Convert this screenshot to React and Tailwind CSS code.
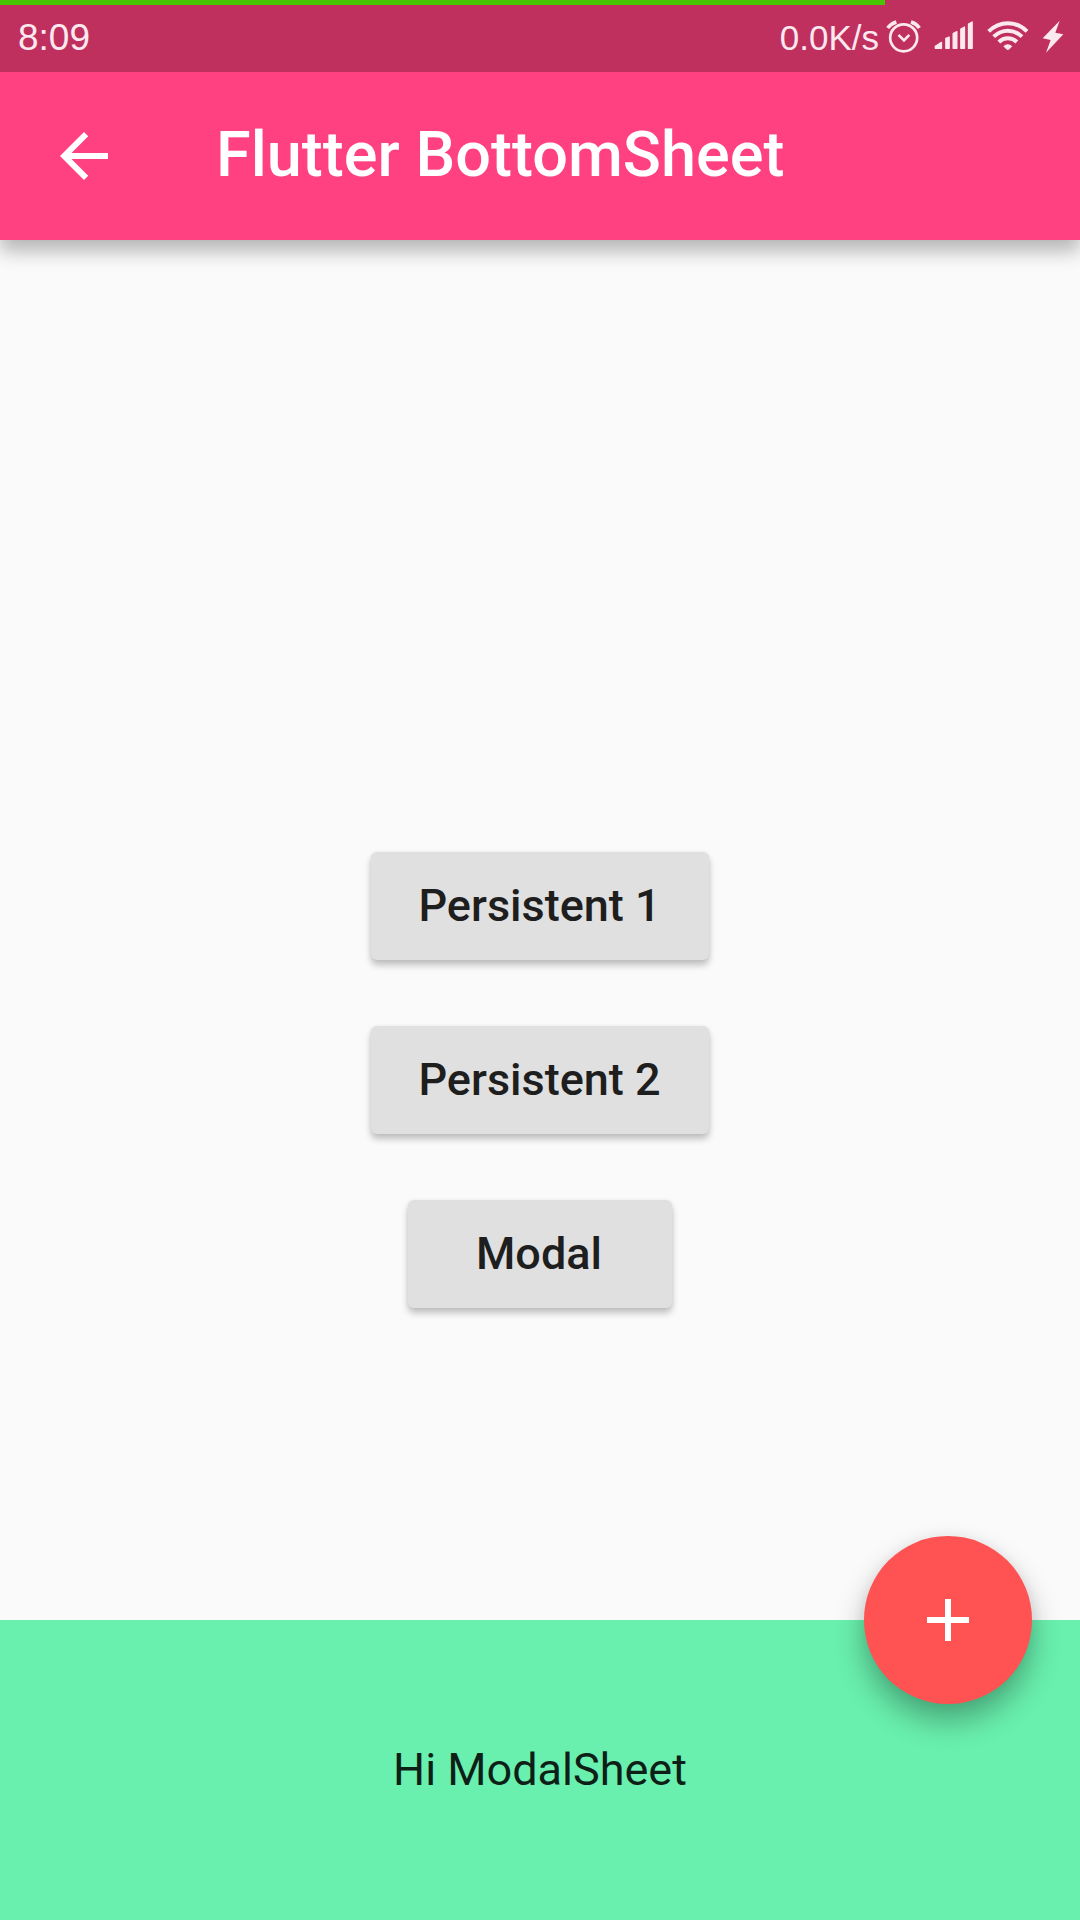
function AlarmIcon() {
  return (
    <svg className="mt-[19px] h-[35px] w-[35px] shrink-0" viewBox="378 57 105 105" fill="none" stroke="currentColor">
      <circle cx="431" cy="113.5" r="40.5" strokeWidth="8" />
      <path d="M415.500 104.500 432 121 448 104.500" strokeWidth="8" />
      <path d="M383 84Q393 71 409 66M453 66Q469 71 478 84" strokeWidth="11" />
    </svg>
  );
}

function SignalIcon() {
  return (
    <svg className="mt-5 ml-[13px] h-[30px] w-10 shrink-0" viewBox="522 60 120 90" fill="currentColor" stroke="currentColor" strokeWidth="4" strokeLinejoin="round">
      <path d="M526 145V139L544.500 127V145ZM557.500 145V115L567.500 111V145ZM579.500 145V101L590.500 95V145ZM602.500 145V87L613.500 81V145ZM625.500 145V72L636.500 66V145Z" />
    </svg>
  );
}

function WifiIcon() {
  return (
    <svg className="mt-5 ml-[13px] h-[31px] w-[42px] shrink-0" viewBox="681 60 126 93" fill="none" stroke="currentColor">
      <path d="M686 94Q711 69.500 743.500 69.500T801 94" strokeWidth="12" />
      <path d="M701 110Q720 92 743.500 92T786 110" strokeWidth="12" />
      <path d="M716.500 126Q728 115 743.500 115T770.500 126" strokeWidth="12" />
      <path d="M730 139Q743.500 126 757 139L748 148Q743.500 152 739 148Z" fill="currentColor" stroke="none" />
    </svg>
  );
}

function BoltIcon() {
  return (
    <svg className="mt-5 ml-[13px] h-[33px] w-[22px] shrink-0" viewBox="846 60 66 99" fill="currentColor">
      <path d="M899 62 848 115 872 120 858 158 910 103 886 98Z" />
    </svg>
  );
}

function StatusBar() {
  return (
    <div className="h-[72px] bg-[#bf305f] font-['Liberation_Sans',sans-serif] text-[#fce9ef]">
      <div className="h-[5px] w-[885px] bg-[#49c400]" />
      <div className="-mt-[5px] flex h-[72px] items-start pr-4 pl-[18px]">
        <span className="mt-[17px] text-[37px] leading-[42px]">8:09</span>
        <div className="ml-auto flex items-start">
          <span className="mt-[17px] mr-[7px] text-[35px] leading-[42px]">0.0K/s</span>
          <AlarmIcon />
          <SignalIcon />
          <WifiIcon />
          <BoltIcon />
        </div>
      </div>
    </div>
  );
}

function AppBar() {
  return (
    <header className="relative bg-[#ff4081] shadow-[0_11px_18px_0_rgba(0,0,0,0.28)]">
      <StatusBar />
      <div className="flex h-[168px] items-center pl-12 text-white">
        <svg className="h-[72px] w-[72px]" viewBox="0 0 24 24" fill="currentColor">
          <path d="M20 11H7.830l5.590-5.590L12 4l-8 8 8 8 1.410-1.410L7.830 13H20v-2z" />
        </svg>
        <h1 className="ml-24 pb-0.5 text-[63px] leading-[74px] font-medium whitespace-nowrap">Flutter BottomSheet</h1>
      </div>
    </header>
  );
}

function RaisedButton({ children }) {
  return (
    <button className="h-[108px] min-w-[264px] rounded-[6px] bg-[#e0e0e0] pr-[48.5px] pb-0.5 pl-[47.5px] text-[45px] leading-[53px] font-medium whitespace-nowrap text-[#1e1e1e] shadow-[0_5px_7px_0_rgba(0,0,0,0.24),0_0_4px_0_rgba(0,0,0,0.05)]">
      {children}
    </button>
  );
}

export default function App() {
  return (
    <div className="flex h-[1920px] w-[1080px] flex-col overflow-hidden bg-[#fafafa] font-['Roboto',sans-serif]">
      <AppBar />
      <main className="flex flex-1 flex-col items-center justify-center gap-[66px] pt-[300px]">
        <RaisedButton>Persistent 1</RaisedButton>
        <RaisedButton>Persistent 2</RaisedButton>
        <RaisedButton><span className="mr-px">Modal</span></RaisedButton>
      </main>
      <section className="relative flex h-[300px] items-center justify-center bg-[#69f0ae]">
        <p className="pb-0.5 text-[45px] leading-[53px] text-[#0e1f17]">Hi ModalSheet</p>
        <button
          aria-label="Add"
          className="absolute -top-[84px] right-12 flex h-[168px] w-[168px] items-center justify-center rounded-full bg-[#ff5252] text-white shadow-[0_17px_30px_0_rgba(0,0,0,0.3),0_0_14px_0_rgba(0,0,0,0.05)]"
        >
          <svg className="h-[72px] w-[72px]" viewBox="0 0 24 24" fill="currentColor">
            <path d="M19 13h-6v6h-2v-6H5v-2h6V5h2v6h6v2z" />
          </svg>
        </button>
      </section>
    </div>
  );
}
